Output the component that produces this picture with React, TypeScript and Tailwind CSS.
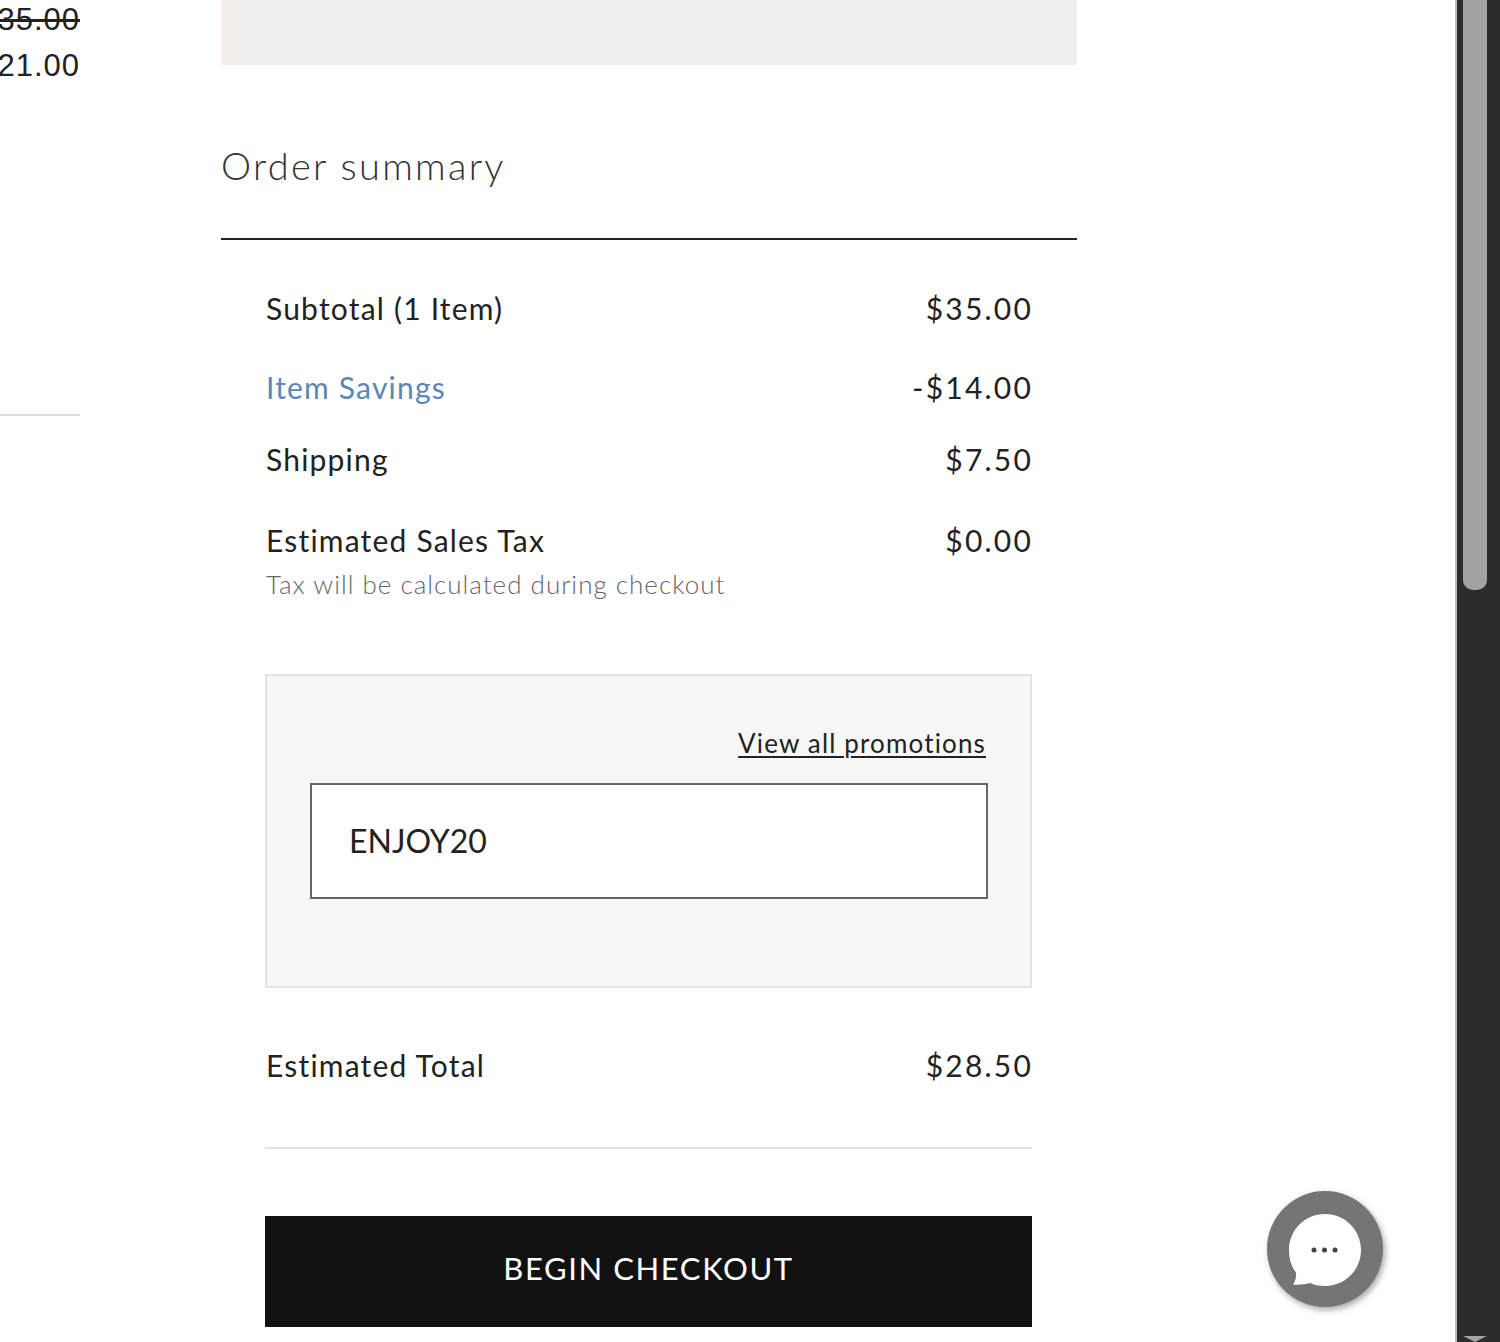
import React from "react";

function SummaryRow({ label, value, labelClass = "text-[#222]" }: { label: string; value: string; labelClass?: string }) {
  return (
    <div className="flex justify-between items-center h-[36px] text-[30px]">
      <span className={`tracking-[1.2px] ${labelClass}`}>{label}</span>
      <span className="tracking-[2.2px] -mr-[1px] text-[#222]">{value}</span>
    </div>
  );
}

function ChatBubble() {
  return (
    <div className="absolute left-[1267px] top-[1191px] w-[116px] h-[116px] rounded-full bg-[#757575] shadow-[2px_3px_6px_rgba(0,0,0,0.35)] flex items-center justify-center">
      <svg width="76" height="76" viewBox="0 0 76 76" className="mt-[2px]">
        <path
          d="M38 2c20 0 36 16 36 36S58 74 38 74c-6 0-11-1-15-3-5 1.500-11 2-17 1.500 2-3 3.500-7 3-12C4 54 2 46 2 38 2 18 18 2 38 2z"
          fill="#fff"
        />
        <circle cx="27" cy="38" r="2.500" fill="#444" />
        <circle cx="37.500" cy="38" r="2.500" fill="#444" />
        <circle cx="48" cy="38" r="2.500" fill="#444" />
      </svg>
    </div>
  );
}

export default function App() {
  return (
    <div className="relative flex w-[1500px] h-[1342px] overflow-hidden bg-white font-['Lato',sans-serif]">
      {/* left column, cut off by the crop */}
      <div className="w-[80px] shrink-0 overflow-hidden">
        <div className="flex flex-col items-end mt-[1px] font-['Liberation_Sans',sans-serif] text-[31px] tracking-[1px] text-[#222] whitespace-nowrap">
          <span className="h-[46px] leading-[38px] line-through">$35.00</span>
          <span className="h-[46px] leading-[38px]">$21.00</span>
        </div>
        <div className="mt-[321px] h-[2px] bg-[#ddd]" />
      </div>

      {/* order summary */}
      <div className="ml-[141px] w-[856px] shrink-0 flex flex-col">
        <div className="h-[65px] bg-[#f3efec]" />
        <h2 className="mt-[76px] h-[48px] leading-[48px] text-[38px] font-light tracking-[2.300px] text-[#333]">Order summary</h2>
        <div className="mt-[49px] h-[2px] bg-[#222]" />

        <div className="px-[45px]">
          <div className="mt-[50px]">
            <SummaryRow label="Subtotal (1 Item)" value="$35.00" />
          </div>
          <div className="mt-[43px]">
            <SummaryRow label="Item Savings" value="-$14.00" labelClass="text-[#5b86b8]" />
          </div>
          <div className="mt-[36px]">
            <SummaryRow label="Shipping" value="$7.50" />
          </div>
          <div className="mt-[45px]">
            <SummaryRow label="Estimated Sales Tax" value="$0.00" />
          </div>
          <p className="mt-[10px] h-[32px] leading-[32px] text-[26px] font-light tracking-[1px] text-[#666]">Tax will be calculated during checkout</p>

          <div className="mt-[74px] -ml-[1px] h-[314px] border-2 border-[#e4e4e4] bg-[#f7f7f7] px-[43px] flex flex-col">
            <a className="mt-[52px] self-end h-[32px] leading-[30px] mr-[1px] text-[26px] tracking-[1.150px] text-[#222] underline underline-offset-[3px]">View all promotions</a>
            <div className="mt-[23px] -mr-[1px] h-[116px] border-2 border-[#666] bg-white flex items-center pl-[37px] text-[32px] text-[#222]">ENJOY20</div>
          </div>

          <div className="mt-[59px]">
            <SummaryRow label="Estimated Total" value="$28.50" />
          </div>
          <div className="mt-[64px] -ml-[1px] h-[2px] bg-[#e4e4e4]" />
          <button className="mt-[67px] -ml-[1px] block w-[767px] h-[111px] bg-[#111] text-white text-[31px] tracking-[1.600px] pb-[6px]">BEGIN CHECKOUT</button>
        </div>
      </div>

      {/* browser scrollbar */}
      <div className="ml-auto relative w-[45px] shrink-0 bg-[#2c2c2c] border-l-2 border-[#bbb]">
        <div className="ml-[6px] w-[24px] h-[590px] bg-[#a3a3a3] rounded-b-[10px]" />
        <div className="absolute left-[6px] bottom-0 w-0 h-0 border-x-[12px] border-x-transparent border-t-[6px] border-t-[#a3a3a3]" />
      </div>

      <ChatBubble />
    </div>
  );
}
